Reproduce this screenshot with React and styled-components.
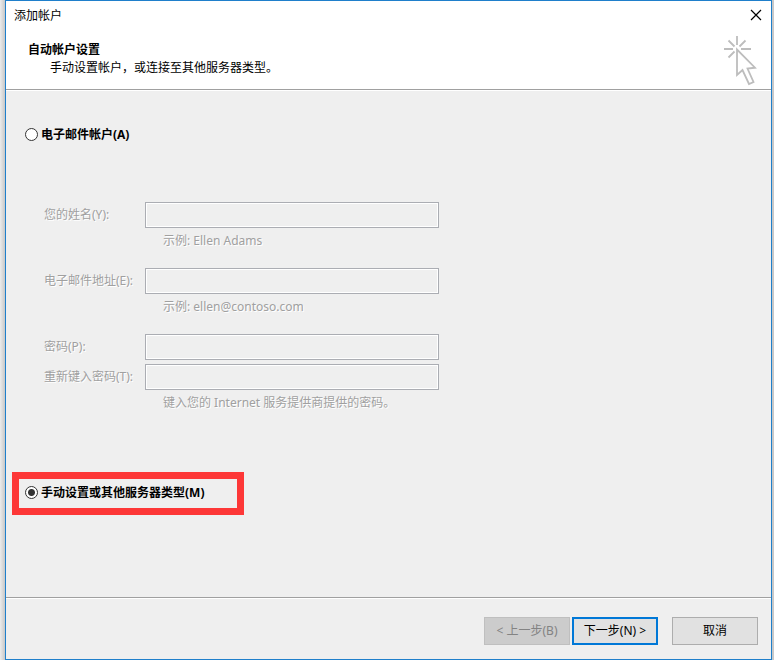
import React, { useState } from "react";
import styled, { createGlobalStyle } from "styled-components";

const GlobalStyle = createGlobalStyle`
  * { box-sizing: border-box; }
  body {
    margin: 0;
    background: #d6d6d6;
    font: 12px/18px "Noto Sans", "Noto Sans CJK SC", sans-serif;
    color: #000;
  }
  button, input { font: inherit; }
`;

const Desktop = styled.div`
  min-height: 100vh;
  display: flex;
  padding: 0 2px 0 5px;
  background: linear-gradient(90deg, #ececec, #c8c8c8 5px);
`;

const Dialog = styled.main`
  flex: 1;
  display: flex;
  flex-direction: column;
  border: 1px solid #1f7fcb;
  background: #efefef;
`;

const Header = styled.header`
  background: #fff;
  border-bottom: 1px solid #a0a0a0;
`;

const TitleBar = styled.div`
  display: flex;
  align-items: center;
  justify-content: space-between;
  height: 28px;
  padding: 0 9px 0 8px;
`;

const Caption = styled.span`
  padding-top: 2px;
`;

const CloseButton = styled.button`
  display: flex;
  padding: 0;
  border: 0;
  background: none;
`;

const Banner = styled.div`
  display: flex;
  justify-content: space-between;
  height: 60px;
  padding: 7px 14px 0 22px;
`;

const BannerText = styled.div`
  padding-top: 5px;
`;

const Heading = styled.h1`
  margin: 0;
  font-size: 12px;
  line-height: 18px;
  font-weight: 700;
`;

const Subheading = styled.p`
  margin: 0 0 0 22px;
`;

const Body = styled.section`
  flex: 1;
  border-top: 1px solid #fff;
  padding-top: 33px;
`;

const Option = styled.label`
  display: flex;
  align-items: center;
  gap: 3px;
  height: 20px;
  font-weight: 700;
`;

const OptionRow = styled.div`
  display: flex;
  padding-left: 19px;
`;

const MarkedOption = styled.div`
  display: flex;
  width: 232px;
  margin: 56px 0 0 6px;
  padding: 3px 6px 6px;
  border: 7px solid #fd3737;
`;

const Radio = styled.input`
  appearance: none;
  width: 13px;
  height: 13px;
  margin: 0;
  border: 1px solid #333;
  border-radius: 50%;
  background: #fff;
  &:checked {
    background: radial-gradient(circle, #333 3px, #fff 4px);
  }
`;

const Fields = styled.fieldset`
  margin: 58px 0 0;
  padding: 0 0 0 38px;
  border: 0;
  color: #a0a0a0;
  text-shadow: 1px 1px #fff;
`;

const Group = styled.div`
  & + & { margin-top: 14px; }
`;

const FieldRow = styled.div`
  display: flex;
  align-items: center;
  & + & { margin-top: 4px; }
`;

const Label = styled.label`
  width: 101px;
  white-space: nowrap;
`;

const TextInput = styled.input`
  width: 294px;
  height: 26px;
  padding: 0 4px;
  border: 1px solid #abadb3;
  box-shadow: inset 0 0 0 1px #fff;
  background: #efefef;
`;

const Hint = styled.p`
  margin: 0 0 0 119px;
  line-height: 26px;
`;

const Footer = styled.footer`
  border-top: 1px solid #a0a0a0;
  box-shadow: inset 0 1px #fff;
  display: flex;
  justify-content: flex-end;
  gap: 14px;
  padding: 19px 13px 14px;
`;

const Steps = styled.div`
  display: flex;
  gap: 2px;
`;

const Button = styled.button`
  width: 86px;
  height: 28px;
  padding: 0;
  white-space: pre;
  color: #000;
  border: ${(p) => (p.$primary ? "2px solid #0078d7" : "1px solid #adadad")};
  background: #e1e1e1;
  &:disabled {
    color: #838383;
    border-color: #bfbfbf;
    background: #cccccc;
  }
`;

function CloseIcon() {
  return (
    <svg width="12" height="12" viewBox="0 0 12 12" stroke="#000" strokeWidth="1.2" aria-hidden="true">
      <path d="M1 1 11 11M11 1 1 11" />
    </svg>
  );
}

function ClickIcon() {
  return (
    <svg width="34" height="50" viewBox="0 0 34 50" fill="none" stroke="#bdbdbd" strokeWidth="1.8" aria-hidden="true">
      <path d="M14 0v9M1 13h9M18 13h10M5.5 4.5l6 6M22.5 4.5l-6 6M5.5 21.5l6-6" />
      <path d="M14 13.5V39l5.5-5L26 48l4.5-2-6-13.5 7.5-.8z" />
    </svg>
  );
}

function ModeOption({ checked, onSelect, children }) {
  return (
    <Option>
      <Radio type="radio" name="mode" checked={checked} onChange={onSelect} />
      <Caption>{children}</Caption>
    </Option>
  );
}

function Field({ id, label, type = "text" }) {
  return (
    <FieldRow>
      <Label htmlFor={id}>{label}</Label>
      <TextInput id={id} type={type} />
    </FieldRow>
  );
}

export default function App() {
  const [mode, setMode] = useState("manual");
  return (
    <Desktop>
      <GlobalStyle />
      <Dialog>
        <Header>
          <TitleBar>
            <Caption>添加帐户</Caption>
            <CloseButton type="button" aria-label="关闭"><CloseIcon /></CloseButton>
          </TitleBar>
          <Banner>
            <BannerText>
              <Heading>自动帐户设置</Heading>
              <Subheading>手动设置帐户，或连接至其他服务器类型。</Subheading>
            </BannerText>
            <ClickIcon />
          </Banner>
        </Header>
        <Body>
          <OptionRow>
            <ModeOption checked={mode === "email"} onSelect={() => setMode("email")}>
              电子邮件帐户(A)
            </ModeOption>
          </OptionRow>
          <Fields disabled={mode !== "email"}>
            <Group>
              <Field id="name" label="您的姓名(Y):" />
              <Hint>示例: Ellen Adams</Hint>
            </Group>
            <Group>
              <Field id="email" label="电子邮件地址(E):" />
              <Hint>示例: ellen@contoso.com</Hint>
            </Group>
            <Group>
              <Field id="password" label="密码(P):" type="password" />
              <Field id="confirm" label="重新键入密码(T):" type="password" />
              <Hint>键入您的 Internet 服务提供商提供的密码。</Hint>
            </Group>
          </Fields>
          <MarkedOption>
            <ModeOption checked={mode === "manual"} onSelect={() => setMode("manual")}>
              手动设置或其他服务器类型(M)
            </ModeOption>
          </MarkedOption>
        </Body>
        <Footer>
          <Steps>
            <Button type="button" disabled>{"< 上一步(B)"}</Button>
            <Button type="button" $primary>{"下一步(N) >"}</Button>
          </Steps>
          <Button type="button">取消</Button>
        </Footer>
      </Dialog>
    </Desktop>
  );
}
